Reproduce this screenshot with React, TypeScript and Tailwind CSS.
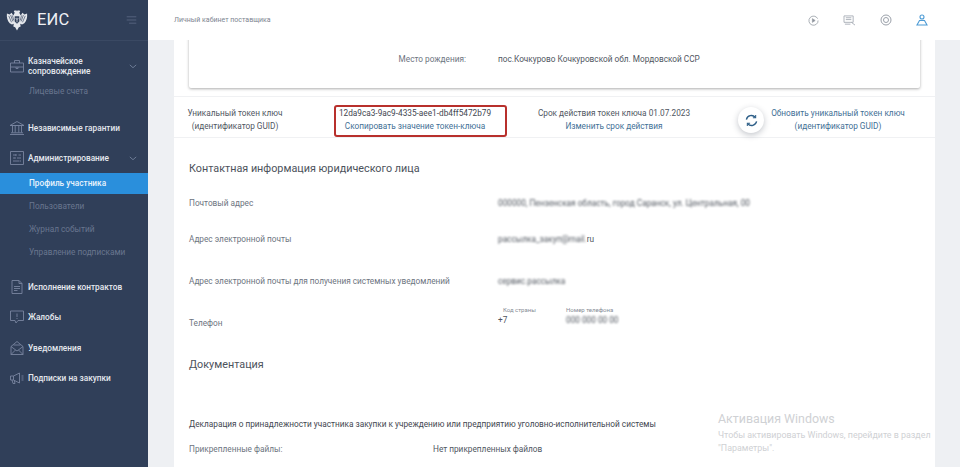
import type { ReactNode } from 'react'

const font = { fontFamily: 'Roboto, "Noto Sans", sans-serif' }

function Stroke({ children }: { readonly children: ReactNode }): React.JSX.Element {
  return (
    <svg
      viewBox="0 0 16 16"
      className="h-[16px] w-[16px] shrink-0"
      fill="none"
      stroke="#78859f"
      strokeWidth="0.9"
    >
      {children}
    </svg>
  )
}

function Chevron(): React.JSX.Element {
  return (
    <svg viewBox="0 0 10 6" className="h-[5px] w-[8px]" fill="none" stroke="#6f7d98" strokeWidth="1.2">
      <path d="M1 1l4 3.5L9 1" />
    </svg>
  )
}

function Emblem(): React.JSX.Element {
  return (
    <svg viewBox="0 0 24 24" className="h-[22px] w-[22px]">
      <path
        d="M1 5l3 1 2-2 2 3 1.500-3-1-1.500L10 1l1 1.500L12 1l1 1.500L14 1l1.500 1.500-1 1.500L16 7l2-3 2 2 3-1c.5 4-.5 8-3 10.500L17.500 17l-2-1 .5 3-2 1-2 3.500L10 20l-2-1 .5-3-2 1L4 15.500C1.500 13 .5 9 1 5z"
        fill="#e4e7ec"
      />
      <path
        d="M3 7.500l3 7M5 6.500l2.500 7M7 7l1.500 5.500M21 7.500l-3 7M19 6.500l-2.500 7M17 7l-1.500 5.500"
        stroke="#303f59"
        strokeWidth="0.7"
        fill="none"
      />
      <path d="M9.500 8h5v5.500L12 16l-2.500-2.500z" fill="#303f59" />
      <path d="M12 9.500v5M10.500 10l1.500 1.500 1.500-1.500" stroke="#e4e7ec" strokeWidth="0.8" fill="none" />
    </svg>
  )
}

const briefcase = (
  <Stroke>
    <path d="M1.500 5h13v9h-13zM1.500 9h13M5.500 5V2.500h5V5M7 9v1.500h2V9" />
  </Stroke>
)
const bank = (
  <Stroke>
    <path d="M1 5.500L8 1.500l7 4zM2 5.500h12M3.500 6v6.500M6.200 6v6.500M9.800 6v6.500M12.500 6v6.500M2 12.800h12M1 14.500h14" />
  </Stroke>
)
const sliders = (
  <Stroke>
    <path d="M1.500 1.500h13v13h-13zM4 5h3M9.500 5H12M4 8h1.500M8 8h4M4 11h4M10.500 11H12M7 4v2M6 7v2M9 10v2" />
  </Stroke>
)
const doc = (
  <Stroke>
    <path d="M3 1.500h7l3 3v10H3zM10 1.500v3h3M5 7.500h6M5 9.500h6M5 11.500h3.500" />
  </Stroke>
)
const complaint = (
  <Stroke>
    <path d="M1.500 2h13v9.500H9L7 14l-1-2.500H1.500zM8 4.500v3.500M8 9v1" />
  </Stroke>
)
const envelope = (
  <Stroke>
    <path d="M2 6.500L8 1.500l6 5v8H2zM2 6.500l6 4.500 6-4.500M2 14.500l4.500-4.500M14 14.500L9.500 10M4.500 5h7" />
  </Stroke>
)
const megaphone = (
  <Stroke>
    <path d="M1.500 6h3v4h-3zM4.500 6l6-3v10l-6-3M3 10l1 3.500h2L5.300 10.500M12.500 6h2M12.500 8h2M12.500 10h2" />
  </Stroke>
)

function MainItem({
  icon,
  label,
  chevron,
  className,
}: {
  readonly icon: ReactNode
  readonly label: ReactNode
  readonly chevron?: boolean
  readonly className?: string
}): React.JSX.Element {
  return (
    <div className={`flex items-center pl-[6px] pr-[11px] ${className ?? ''}`}>
      <span className="flex w-[22px] justify-center">{icon}</span>
      <span className="flex-1 text-[8.25px] leading-[10px] font-medium text-[#e6e9ef]">{label}</span>
      {chevron && <Chevron />}
    </div>
  )
}

function SubItem({ label, active }: { readonly label: string; readonly active?: boolean }): React.JSX.Element {
  return (
    <div
      className={`flex h-[21px] items-center pl-[29px] text-[8.25px] ${
        active ? 'bg-[#2a8fdc] font-medium text-[#e8f3fc]' : 'text-[#69768f]'
      }`}
    >
      {label}
    </div>
  )
}

function Sidebar(): React.JSX.Element {
  return (
    <aside className="flex h-[467px] w-[148px] shrink-0 flex-col bg-[#303f59]">
      <div className="flex h-[41px] items-center border-b border-[#3a4963] pl-[6px] pr-[11px]">
        <Emblem />
        <span className="ml-[9px] flex-1 text-[16.5px] tracking-[0.2px] text-[#eef0f4]">ЕИС</span>
        <svg viewBox="0 0 12 10" className="h-[8px] w-[11px]" fill="none" stroke="#5d6b86" strokeWidth="1">
          <path d="M0 1h12M0 5h12M3 9h9" />
        </svg>
      </div>
      <MainItem
        className="mt-[15px]"
        icon={briefcase}
        label={
          <>
            Казначейское
            <br />
            сопровождение
          </>
        }
        chevron
      />
      <div className="mt-[5px]">
        <SubItem label="Лицевые счета" />
      </div>
      <MainItem className="mt-[18px]" icon={bank} label="Независимые гарантии" />
      <MainItem className="mt-[14px]" icon={sliders} label="Администрирование" chevron />
      <div className="mt-[7px] flex flex-col gap-[2px]">
        <SubItem label="Профиль участника" active />
        <SubItem label="Пользователи" />
        <SubItem label="Журнал событий" />
        <SubItem label="Управление подписками" />
      </div>
      <MainItem className="mt-[16px]" icon={doc} label="Исполнение контрактов" />
      <MainItem className="mt-[14px]" icon={complaint} label="Жалобы" />
      <MainItem className="mt-[15px]" icon={envelope} label="Уведомления" />
      <MainItem className="mt-[14px]" icon={megaphone} label="Подписки на закупки" />
    </aside>
  )
}

function Header(): React.JSX.Element {
  return (
    <header className="flex h-[40px] shrink-0 items-center bg-white pl-[26px]">
      <span className="flex-1 text-[7px] text-[#7d8490]">Личный кабинет поставщика</span>
      <div className="mr-[32px] flex items-center gap-[24px]">
        <svg viewBox="0 0 12 12" className="h-[11px] w-[11px]" fill="none" stroke="#9aa0a8" strokeWidth="0.9">
          <path d="M10.500 4A5 5 0 1 0 11 6" />
          <path d="M4.800 4l3 2-3 2z" fill="#8b9099" />
        </svg>
        <svg viewBox="0 0 14 12" className="h-[11px] w-[13px]" fill="none" stroke="#a9aeb7" strokeWidth="1">
          <path d="M1 1h10v7H1zM3 3h6M3 5h6M9 8l4 3M2 10h6" />
        </svg>
        <svg viewBox="0 0 12 12" className="h-[12px] w-[12px]" fill="none" stroke="#9ba1aa" strokeWidth="1">
          <circle cx="6" cy="6" r="5" />
          <circle cx="6" cy="6" r="2.500" />
        </svg>
        <svg viewBox="0 0 12 12" className="h-[12px] w-[12px]" fill="none" stroke="#4d9bd5" strokeWidth="1.1">
          <circle cx="6" cy="3" r="2" />
          <path d="M3.500 6.500h5L11 11H1z" />
        </svg>
      </div>
    </header>
  )
}

function TokenRow(): React.JSX.Element {
  return (
    <div className="mt-[8px] flex h-[42px] items-stretch whitespace-nowrap border-y border-[#f0f1f3] pt-[8px] text-[8.25px] leading-[13px] text-[#50565f]">
      <div className="flex w-[160px] shrink-0 items-center justify-center pb-[3px] pr-[38px] text-center">
        <div>
          Уникальный токен ключ
          <br />
          (идентификатор GUID)
        </div>
      </div>
      <div className="flex w-[173px] shrink-0 flex-col items-center justify-center rounded-[3px] border-[2px] border-[#b8302c] pb-[3px] pr-[11px]">
        <span className="text-[#3f4650]">12da9ca3-9ac9-4335-aee1-db4ff5472b79</span>
        <span className="text-[#3f6f96]">Скопировать значение токен-ключа</span>
      </div>
      <div className="ml-[31px] flex w-[152px] shrink-0 items-center justify-center pb-[3px] text-center">
        <div>
          Срок действия токен ключа 01.07.2023
          <br />
          <span className="text-[#3f6f96]">Изменить срок действия</span>
        </div>
      </div>
      <div className="ml-[48px] mt-[2px] flex h-[26px] w-[26px] shrink-0 items-center justify-center rounded-full bg-white shadow-[0_2px_6px_rgba(40,50,70,0.28)]">
        <svg viewBox="0 0 14 14" className="h-[13px] w-[13px]" fill="none" stroke="#2e5f88" strokeWidth="1.5">
          <path d="M1.500 6A5.500 5.500 0 0 1 11 3.500M12.500 8A5.500 5.500 0 0 1 3 10.500" />
          <path d="M11.500 1v3h-3M2.500 13v-3h3" strokeWidth="1.1" />
        </svg>
      </div>
      <div className="ml-[7px] flex w-[134px] shrink-0 items-center justify-center pb-[3px] text-center text-[#3f6f96]">
        <div>
          Обновить уникальный токен ключ
          <br />
          (идентификатор GUID)
        </div>
      </div>
    </div>
  )
}

function Field({
  label,
  className,
  children,
}: {
  readonly label: string
  readonly className?: string
  readonly children: ReactNode
}): React.JSX.Element {
  return (
    <div className={`flex items-center pl-[15px] text-[8.25px] leading-[12px] ${className ?? ''}`}>
      <span className="w-[309px] shrink-0 text-[#6d7480]">{label}</span>
      {children}
    </div>
  )
}

function Masked({ children }: { readonly children: string }): React.JSX.Element {
  return <span className="whitespace-nowrap text-[8.25px] text-[#50565f] blur-[1.2px]">{children}</span>
}

export default function App(): React.JSX.Element {
  return (
    <div className="relative flex h-[467px] w-[960px] overflow-hidden bg-[#eef0f3]" style={font}>
      <Sidebar />
      <div className="flex min-w-0 flex-1 flex-col">
        <Header />
        <main className="ml-[26px] mr-[25px] flex-1 overflow-hidden bg-white">
          <div className="mx-[15px] -mt-[10px] flex h-[58px] items-center rounded-[2px] pt-[1px] text-[8.25px] shadow-[0_1px_3px_rgba(0,0,0,0.32)]">
            <span className="w-[277px] text-right text-[#6d7480]">Место рождения:</span>
            <span className="ml-[32px] text-[#50565f]">пос.Кочкурово Кочкуровской обл. Мордовской ССР</span>
          </div>
          <TokenRow />
          <h2 className="mt-[24px] pl-[15px] text-[10.8px] leading-[14px] text-[#4c525b]">
            Контактная информация юридического лица
          </h2>
          <Field label="Почтовый адрес" className="mt-[21px]">
            <Masked>000000, Пензенская область, город Саранск, ул. Центральная, 00</Masked>
          </Field>
          <Field label="Адрес электронной почты" className="mt-[24px]">
            <span>
              <Masked>рассылка_закуп@mail.</Masked>
              <span className="text-[#50565f]">ru</span>
            </span>
          </Field>
          <Field label="Адрес электронной почты для получения системных уведомлений" className="mt-[30px]">
            <Masked>сервис.рассылка</Masked>
          </Field>
          <div className="mt-[19px] flex pl-[15px] text-[8.25px] leading-[12px]">
            <span className="mt-[11px] w-[309px] shrink-0 text-[#6d7480]">Телефон</span>
            <div className="w-[68px] shrink-0">
              <div className="pl-[5px] text-[6px] leading-[8px] text-[#868c96]">Код страны</div>
              <div className="text-[#50565f]">+7</div>
            </div>
            <div>
              <div className="text-[6px] leading-[8px] text-[#868c96]">Номер телефона</div>
              <Masked>000 000 00 00</Masked>
            </div>
          </div>
          <h2 className="mt-[29px] pl-[15px] text-[10.8px] leading-[14px] text-[#4c525b]">Документация</h2>
          <p className="mt-[46px] pl-[15px] text-[8.25px] leading-[12px] text-[#3f4650]">
            Декларация о принадлежности участника закупки к учреждению или предприятию уголовно-исполнительной системы
          </p>
          <div className="mt-[13px] flex pl-[15px] text-[8.25px] leading-[12px]">
            <span className="w-[244px] shrink-0 text-[#6d7480]">Прикрепленные файлы:</span>
            <span className="text-[#50565f]">Нет прикрепленных файлов</span>
          </div>
        </main>
      </div>
      <div className="pointer-events-none absolute left-[718px] top-[411px] text-[#cfd1d4]">
        <div className="text-[12.4px] leading-[16px]">Активация Windows</div>
        <div className="mt-[2px] text-[8.9px] leading-[13px]">
          Чтобы активировать Windows, перейдите в раздел
          <br />
          "Параметры".
        </div>
      </div>
    </div>
  )
}
